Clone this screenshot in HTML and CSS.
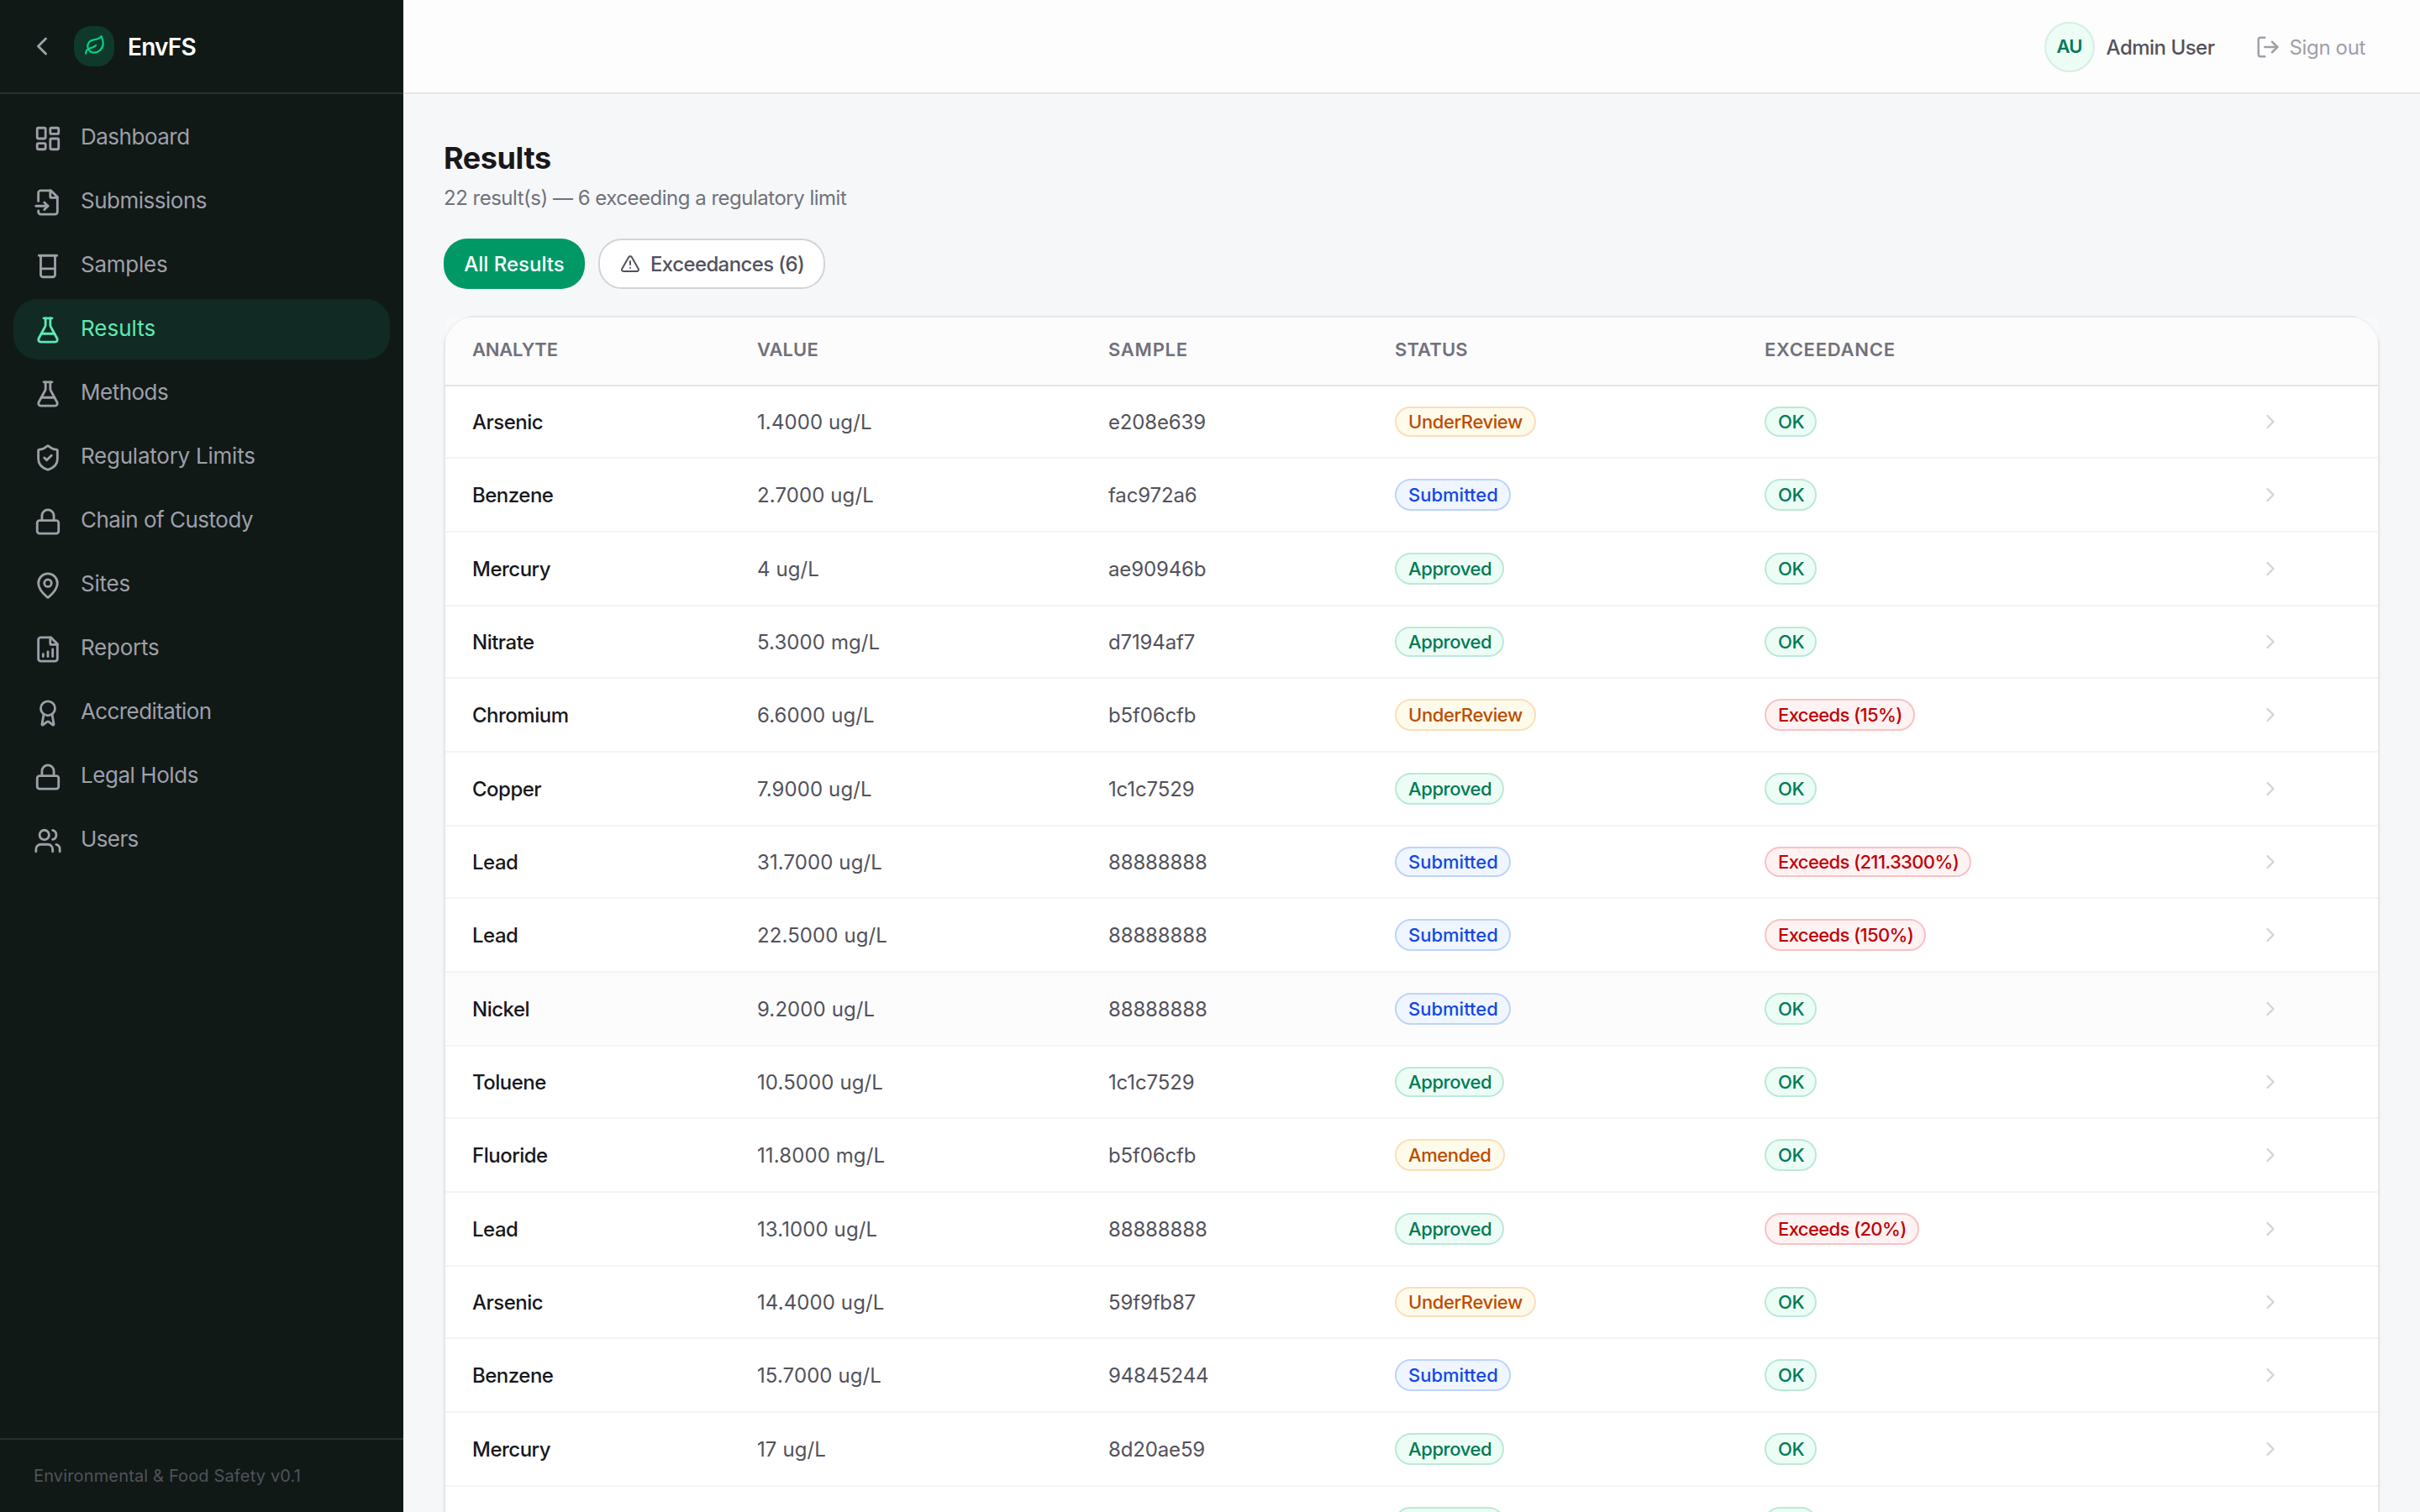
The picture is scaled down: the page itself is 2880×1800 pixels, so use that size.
FILE: index.html
```html
<!DOCTYPE html>
<html lang="en">
<head>
<meta charset="utf-8">
<title>EnvFS – Results</title>
<link rel="stylesheet" href="styles.css">
</head>
<body>
<svg class="sprite" aria-hidden="true">
  <symbol id="chev-left" viewBox="0 0 24 24"><path d="m15 18-6-6 6-6"/></symbol>
  <symbol id="chev-right" viewBox="0 0 24 24"><path d="m9 18 6-6-6-6"/></symbol>
  <symbol id="leaf" viewBox="0 0 24 24"><path d="M11 20A7 7 0 0 1 9.8 6.1C15.5 5 17 4.48 19 2c1 2 2 4.18 2 8 0 5.5-4.78 10-10 10Z"/><path d="M2 21c0-3 1.85-5.36 5.08-6C9.5 14.52 12 13 13 12"/></symbol>
  <symbol id="dashboard" viewBox="0 0 24 24"><rect width="7" height="9" x="3" y="3" rx="1"/><rect width="7" height="5" x="14" y="3" rx="1"/><rect width="7" height="9" x="14" y="12" rx="1"/><rect width="7" height="5" x="3" y="16" rx="1"/></symbol>
  <symbol id="file-input" viewBox="0 0 24 24"><path d="M4 11V4a2 2 0 0 1 2-2h8.5L20 7.5V20a2 2 0 0 1-2 2H6a2 2 0 0 1-2-2v-1"/><path d="M14 2v5a1 1 0 0 0 1 1h5"/><path d="M2 15h10"/><path d="m9 18 3-3-3-3"/></symbol>
  <symbol id="beaker" viewBox="0 0 24 24"><path d="M4.500 3h15"/><path d="M6 3v16a2 2 0 0 0 2 2h8a2 2 0 0 0 2-2V3"/><path d="M6 14h12"/></symbol>
  <symbol id="flask" viewBox="0 0 24 24"><path d="M14 2v6a2 2 0 0 0 .245.96l5.51 10.08A2 2 0 0 1 18 22H6a2 2 0 0 1-1.755-2.96l5.51-10.08A2 2 0 0 0 10 8V2"/><path d="M6.453 15h11.094"/><path d="M8.5 2h7"/></symbol>
  <symbol id="shield" viewBox="0 0 24 24"><path d="M20 13c0 5-3.5 7.5-7.66 8.95a1 1 0 0 1-.67-.01C7.5 20.5 4 18 4 13V6a1 1 0 0 1 1-1c2 0 4.5-1.2 6.24-2.72a1.17 1.17 0 0 1 1.52 0C14.51 3.81 17 5 19 5a1 1 0 0 1 1 1z"/><path d="m9 12 2 2 4-4"/></symbol>
  <symbol id="lock" viewBox="0 0 24 24"><rect width="18" height="11" x="3" y="11" rx="2"/><path d="M7 11V7a5 5 0 0 1 10 0v4"/></symbol>
  <symbol id="pin" viewBox="0 0 24 24"><path d="M20 10c0 4.993-5.539 10.193-7.399 11.799a1 1 0 0 1-1.202 0C9.539 20.193 4 14.993 4 10a8 8 0 0 1 16 0"/><circle cx="12" cy="10" r="3"/></symbol>
  <symbol id="file-chart" viewBox="0 0 24 24"><path d="M6 22a2 2 0 0 1-2-2V4a2 2 0 0 1 2-2h8.500L20 7.500V20a2 2 0 0 1-2 2z"/><path d="M14 2v5a1 1 0 0 0 1 1h5"/><path d="M8 18v-2"/><path d="M12 18v-4"/><path d="M16 18v-6"/></symbol>
  <symbol id="award" viewBox="0 0 24 24"><path d="m15.477 12.890 1.515 8.526a.5.5 0 0 1-.810.470l-3.580-2.687a1 1 0 0 0-1.197 0l-3.586 2.686a.5.5 0 0 1-.810-.469l1.514-8.526"/><circle cx="12" cy="8" r="6"/></symbol>
  <symbol id="users" viewBox="0 0 24 24"><path d="M16 21v-2a4 4 0 0 0-4-4H6a4 4 0 0 0-4 4v2"/><circle cx="9" cy="7" r="4"/><path d="M22 21v-2a4 4 0 0 0-3-3.870"/><path d="M16 3.130a4 4 0 0 1 0 7.750"/></symbol>
  <symbol id="logout" viewBox="0 0 24 24"><path d="M9 21H5a2 2 0 0 1-2-2V5a2 2 0 0 1 2-2h4"/><path d="m16 17 5-5-5-5"/><path d="M21 12H9"/></symbol>
  <symbol id="warning" viewBox="0 0 24 24"><path d="m21.730 18-8-14a2 2 0 0 0-3.480 0l-8 14A2 2 0 0 0 4 21h16a2 2 0 0 0 1.730-3"/><path d="M12 9v4"/><path d="M12 17h.01"/></symbol>
</svg>
<div class="app">
  <aside class="sidebar">
    <div class="brand">
      <svg class="icon back"><use href="#chev-left"/></svg>
      <span class="logo"><svg class="icon"><use href="#leaf"/></svg></span>
      <span class="brand-name">EnvFS</span>
    </div>
    <nav class="nav">
      <a class="nav-item"><svg class="icon"><use href="#dashboard"/></svg><span class="tight">Dashboard</span></a>
      <a class="nav-item"><svg class="icon"><use href="#file-input"/></svg><span class="tight">Submissions</span></a>
      <a class="nav-item"><svg class="icon"><use href="#beaker"/></svg><span class="loose">Samples</span></a>
      <a class="nav-item active"><svg class="icon"><use href="#flask"/></svg><span class="plain">Results</span></a>
      <a class="nav-item"><svg class="icon"><use href="#flask"/></svg><span class="tight">Methods</span></a>
      <a class="nav-item"><svg class="icon"><use href="#shield"/></svg><span class="loose">Regulatory Limits</span></a>
      <a class="nav-item"><svg class="icon"><use href="#lock"/></svg><span class="tight">Chain of Custody</span></a>
      <a class="nav-item"><svg class="icon"><use href="#pin"/></svg><span class="loose">Sites</span></a>
      <a class="nav-item"><svg class="icon"><use href="#file-chart"/></svg><span class="loose">Reports</span></a>
      <a class="nav-item"><svg class="icon"><use href="#award"/></svg><span class="tighter">Accreditation</span></a>
      <a class="nav-item"><svg class="icon"><use href="#lock"/></svg><span>Legal Holds</span></a>
      <a class="nav-item"><svg class="icon"><use href="#users"/></svg><span class="tighter">Users</span></a>
    </nav>
    <div class="side-foot">Environmental &amp; Food Safety v0.1</div>
  </aside>
  <div class="main">
    <header class="topbar">
      <span class="avatar">AU</span>
      <span class="user">Admin User</span>
      <a class="signout"><svg class="icon"><use href="#logout"/></svg><span>Sign out</span></a>
    </header>
    <main class="content">
      <h1>Results</h1>
      <p class="sub">22 result(s) — 6 exceeding a regulatory limit</p>
      <div class="filters">
        <button class="btn primary">All Results</button>
        <button class="btn outline"><svg class="icon"><use href="#warning"/></svg><span>Exceedances (6)</span></button>
      </div>
      <section class="card">
        <div class="thead"><span class="th-a">Analyte</span><span>Value</span><span class="th-e">Sample</span><span>Status</span><span class="th-e">Exceedance</span></div>
        <div class="rows">
          <div class="row"><b>Arsenic</b><span class="val">1.4000 ug/L</span><span class="id">e208e639</span><span class="cell"><i class="badge amber">UnderReview</i></span><span class="cell"><i class="badge green">OK</i></span><svg class="icon"><use href="#chev-right"/></svg></div>
          <div class="row"><b>Benzene</b><span class="val">2.7000 ug/L</span><span class="id">fac972a6</span><span class="cell"><i class="badge blue">Submitted</i></span><span class="cell"><i class="badge green">OK</i></span><svg class="icon"><use href="#chev-right"/></svg></div>
          <div class="row"><b>Mercury</b><span class="val">4 ug/L</span><span class="id">ae90946b</span><span class="cell"><i class="badge green">Approved</i></span><span class="cell"><i class="badge green">OK</i></span><svg class="icon"><use href="#chev-right"/></svg></div>
          <div class="row"><b>Nitrate</b><span class="val">5.3000 mg/L</span><span class="id">d7194af7</span><span class="cell"><i class="badge green">Approved</i></span><span class="cell"><i class="badge green">OK</i></span><svg class="icon"><use href="#chev-right"/></svg></div>
          <div class="row"><b>Chromium</b><span class="val">6.6000 ug/L</span><span class="id">b5f06cfb</span><span class="cell"><i class="badge amber">UnderReview</i></span><span class="cell"><i class="badge red">Exceeds (15%)</i></span><svg class="icon"><use href="#chev-right"/></svg></div>
          <div class="row"><b>Copper</b><span class="val">7.9000 ug/L</span><span class="id">1c1c7529</span><span class="cell"><i class="badge green">Approved</i></span><span class="cell"><i class="badge green">OK</i></span><svg class="icon"><use href="#chev-right"/></svg></div>
          <div class="row"><b>Lead</b><span class="val">31.7000 ug/L</span><span class="id">88888888</span><span class="cell"><i class="badge blue">Submitted</i></span><span class="cell"><i class="badge red">Exceeds (211.3300%)</i></span><svg class="icon"><use href="#chev-right"/></svg></div>
          <div class="row"><b>Lead</b><span class="val">22.5000 ug/L</span><span class="id">88888888</span><span class="cell"><i class="badge blue">Submitted</i></span><span class="cell"><i class="badge red">Exceeds (150%)</i></span><svg class="icon"><use href="#chev-right"/></svg></div>
          <div class="row hovered"><b>Nickel</b><span class="val">9.2000 ug/L</span><span class="id">88888888</span><span class="cell"><i class="badge blue">Submitted</i></span><span class="cell"><i class="badge green">OK</i></span><svg class="icon"><use href="#chev-right"/></svg></div>
          <div class="row"><b>Toluene</b><span class="val">10.5000 ug/L</span><span class="id">1c1c7529</span><span class="cell"><i class="badge green">Approved</i></span><span class="cell"><i class="badge green">OK</i></span><svg class="icon"><use href="#chev-right"/></svg></div>
          <div class="row"><b>Fluoride</b><span class="val">11.8000 mg/L</span><span class="id">b5f06cfb</span><span class="cell"><i class="badge amber">Amended</i></span><span class="cell"><i class="badge green">OK</i></span><svg class="icon"><use href="#chev-right"/></svg></div>
          <div class="row"><b>Lead</b><span class="val">13.1000 ug/L</span><span class="id">88888888</span><span class="cell"><i class="badge green">Approved</i></span><span class="cell"><i class="badge red">Exceeds (20%)</i></span><svg class="icon"><use href="#chev-right"/></svg></div>
          <div class="row"><b>Arsenic</b><span class="val">14.4000 ug/L</span><span class="id">59f9fb87</span><span class="cell"><i class="badge amber">UnderReview</i></span><span class="cell"><i class="badge green">OK</i></span><svg class="icon"><use href="#chev-right"/></svg></div>
          <div class="row"><b>Benzene</b><span class="val">15.7000 ug/L</span><span class="id">94845244</span><span class="cell"><i class="badge blue">Submitted</i></span><span class="cell"><i class="badge green">OK</i></span><svg class="icon"><use href="#chev-right"/></svg></div>
          <div class="row"><b>Mercury</b><span class="val">17 ug/L</span><span class="id">8d20ae59</span><span class="cell"><i class="badge green">Approved</i></span><span class="cell"><i class="badge green">OK</i></span><svg class="icon"><use href="#chev-right"/></svg></div>
          <div class="row"><b></b><span class="val"></span><span class="id"></span><span class="cell"><i class="badge green">Approved</i></span><span class="cell"><i class="badge green">OK</i></span></div>
        </div>
      </section>
    </main>
  </div>
</div>
</body>
</html>
```
FILE: styles.css
```css
* { box-sizing: border-box; margin: 0; }
body { font-family: Inter, "Liberation Sans", sans-serif; font-size: 24px; background: #f6f7f9; color: #18181b; overflow: hidden; }
.sprite { display: none; }
.icon { display: block; flex: none; fill: none; stroke: currentColor; stroke-width: 2; stroke-linecap: round; stroke-linejoin: round; }
.app { display: flex; height: 1800px; overflow: hidden; }

/* Sidebar */
.sidebar { width: 480px; flex: none; display: flex; flex-direction: column; background: #101916; color: #9f9fa9; }
.brand { height: 112px; padding: 0 32px; display: flex; align-items: center; border-bottom: 2px solid #28302d; }
.back { width: 36px; height: 36px; margin-right: 20px; }
.logo { width: 48px; height: 48px; margin-right: 16px; border-radius: 20px; background: #0e392b; color: #00d492; display: flex; align-items: center; justify-content: center; padding: 0 0 2px 2px; }
.logo .icon { width: 26px; height: 26px; }
.brand-name { padding-top: 2px; font-size: 28px; font-weight: 600; letter-spacing: -.8px; color: #fff; }
.nav { flex: 1; padding: 16px; display: flex; flex-direction: column; gap: 4px; }
.nav-item { height: 72px; padding: 2px 24px 0; display: flex; align-items: center; gap: 22px; border-radius: 28px; font-size: 26px; letter-spacing: -.45px; }
.nav-item .icon { width: 34px; height: 34px; }
.nav-item span { padding-bottom: 5px; }
.nav-item.active { background: #112a23; color: #5ee9b5; }
.plain { letter-spacing: 0; }
.loose { letter-spacing: -.24px; }
.tight { letter-spacing: -.5px; }
.tighter { letter-spacing: -.6px; }
.side-foot { height: 88px; padding: 0 40px; display: flex; align-items: center; border-top: 2px solid #28302d; font-size: 20px; letter-spacing: .15px; color: #52525c; }

/* Top bar */
.main { flex: 1; min-width: 0; display: flex; flex-direction: column; }
.topbar { height: 112px; flex: none; padding: 2px 65px 0 0; display: flex; align-items: center; justify-content: flex-end; background: #fdfdfd; border-bottom: 2px solid #e6e7e9; }
.avatar { width: 60px; height: 60px; margin-right: 14px; padding-bottom: 3px; border: 2px solid #d6eee4; border-radius: 50%; background: #ecfdf5; color: #007a55; display: flex; align-items: center; justify-content: center; font-size: 22px; font-weight: 600; letter-spacing: -.8px; }
.user { font-weight: 500; letter-spacing: -.5px; color: #52525c; margin-right: 48px; }
.signout { display: flex; align-items: center; gap: 11px; color: #9f9fa9; letter-spacing: -.35px; }
.signout .icon { width: 30px; height: 30px; }

/* Page content */
.content { padding: 56px 48px 0; display: flex; flex-direction: column; }
h1 { font-size: 36px; line-height: 40px; font-weight: 700; letter-spacing: -.4px; }
.sub { margin-top: 10px; line-height: 36px; letter-spacing: -.5px; color: #71717b; }
.filters { margin: 30px 0 32px; display: flex; gap: 16px; }
.btn { height: 60px; padding: 0 24px; border: 0; border-radius: 28px; font: 500 24px Inter, "Liberation Sans", sans-serif; display: flex; align-items: center; gap: 12px; }
.primary { width: 168px; justify-content: center; background: #009966; color: #fff; }
.outline { width: 270px; border: 2px solid #d4d4d8; background: #fff; color: #52525c; letter-spacing: -.6px; }
.outline span { white-space: nowrap; }
.btn .icon { width: 24px; height: 24px; }

/* Results table */
.card { border: 2px solid #e6e7e9; border-radius: 36px; background: #fff; box-shadow: 0 2px 5px rgba(0, 0, 0, .04); }
.thead, .row { display: grid; grid-template-columns: 339px 418px 341px 440px 588px 1fr; align-items: center; padding-left: 32px; }
.thead { height: 82px; padding-bottom: 4px; border-bottom: 2px solid #e4e4e7; background: rgba(250, 250, 250, .6); font-size: 22px; font-weight: 600; text-transform: uppercase; color: #71717b; letter-spacing: .1px; }
.th-a { letter-spacing: -.25px; }
.th-e { letter-spacing: .75px; }
.row { height: 88px; border-bottom: 2px solid #f4f4f5; color: #52525c; }
.row b { font-weight: 500; letter-spacing: -.5px; color: #18181b; }
.row .icon { width: 28px; height: 28px; color: #d4d4d8; }
.hovered { background: #fcfcfd; }
.val { letter-spacing: .1px; }
.id { letter-spacing: -.15px; }
.cell { display: flex; }
.badge { height: 38px; padding: 0 13px 0 14px; display: flex; align-items: center; border: 2px solid; border-radius: 19px; font-style: normal; font-size: 22px; font-weight: 500; letter-spacing: -.41px; white-space: nowrap; }
.row:nth-child(3n+1) { height: 86px; }
.row:nth-child(3n+1) .badge { height: 36px; }
.green { background: #ecfdf5; border-color: #bbe9d8; color: #007a55; }
.amber { padding-right: 14px; background: #fffbeb; border-color: #f9dfb9; color: #bb4d00; }
.blue { background: #eff6ff; border-color: #bed3fd; color: #1447e6; letter-spacing: 0; }
.red { background: #fef2f2; border-color: #f9c2c4; color: #c10007; letter-spacing: -.62px; }
```
